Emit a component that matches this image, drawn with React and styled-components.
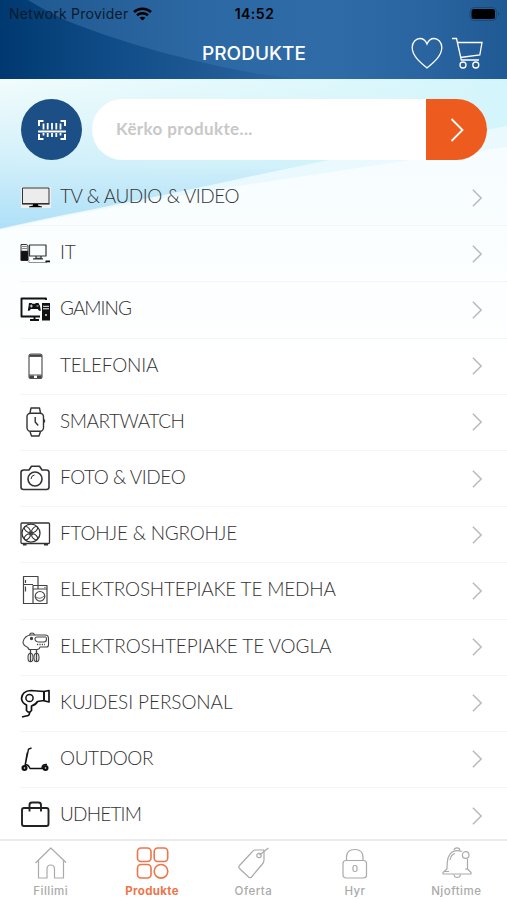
import styled, { createGlobalStyle } from 'styled-components'

const App = () => {
    return (
        <Screen>
            <GlobalStyle />
            <Header>
                <HeaderWaves />
                <StatusBar>
                    <Provider>
                        Network Provider
                        <WifiIcon />
                    </Provider>
                    <Time>14:52</Time>
                    <BatteryIcon />
                </StatusBar>
                <TitleBar>
                    <Title>PRODUKTE</Title>
                    <Actions>
                        <HeartIcon />
                        <CartIcon />
                    </Actions>
                </TitleBar>
            </Header>
            <Main>
                <PageWaves />
                <SearchRow>
                    <ScanButton aria-label="Scan">
                        <BarcodeIcon />
                    </ScanButton>
                    <SearchBox>
                        <SearchInput placeholder="Kërko produkte..." />
                        <SearchButton aria-label="Search">
                            <Arrow size={24} color="#fff" />
                        </SearchButton>
                    </SearchBox>
                </SearchRow>
                <List>
                    {categories.map(({ name, icon, spacing }) => (
                        <Row key={name}>
                            <Icon>{icon}</Icon>
                            <Name $spacing={spacing}>{name}</Name>
                            <Arrow size={18} color="#b9b9bb" />
                        </Row>
                    ))}
                </List>
            </Main>
            <TabBar>
                {tabs.map(({ label, icon, active, spacing }) => (
                    <Tab key={label} $active={active} $spacing={spacing}>
                        {icon}
                        <span>{label}</span>
                    </Tab>
                ))}
            </TabBar>
        </Screen>
    )
}

const HeaderWaves = () => (
    <Backdrop viewBox="0 0 507 79" preserveAspectRatio="none">
        <defs>
            <linearGradient id="light" x1="0" x2="1">
                <stop offset="0" stopColor="#1f5890" />
                <stop offset="0.4" stopColor="#2c68a3" />
                <stop offset="0.65" stopColor="#2f6ca7" />
                <stop offset="0.85" stopColor="#2964a0" />
                <stop offset="1" stopColor="#205a94" />
            </linearGradient>
            <linearGradient id="dark" x1="0" x2="1">
                <stop offset="0" stopColor="#003970" />
                <stop offset="0.35" stopColor="#0f4b86" />
                <stop offset="0.75" stopColor="#215c97" />
                <stop offset="1" stopColor="#2c68a3" />
            </linearGradient>
        </defs>
        <path d="M0 0h507v79H0z" fill="url(#light)" />
        <path
            d="M0 0H28C45 10 60 18 75 24C125 43 180 59 253 73L300 79H0z"
            fill="url(#dark)"
        />
    </Backdrop>
)

const PageWaves = () => (
    <Backdrop viewBox="0 0 507 761" preserveAspectRatio="none">
        <defs>
            <linearGradient id="sky" x1="0" y1="0" x2="0" y2="150" gradientUnits="userSpaceOnUse">
                <stop offset="0" stopColor="#f2fcfc" />
                <stop offset="0.5" stopColor="#d5f1fa" />
                <stop offset="1" stopColor="#aee0f8" />
            </linearGradient>
            <linearGradient id="glow" x1="0" x2="1">
                <stop offset="0" stopColor="#d3f5fb" stopOpacity="0" />
                <stop offset="1" stopColor="#d3f5fb" />
            </linearGradient>
            <linearGradient id="page" x1="0" y1="90" x2="0" y2="290" gradientUnits="userSpaceOnUse">
                <stop offset="0" stopColor="#f7fdff" />
                <stop offset="0.45" stopColor="#fbfeff" />
                <stop offset="1" stopColor="#fff" />
            </linearGradient>
        </defs>
        <path d="M0 0h507v151H0z" fill="url(#sky)" />
        <path d="M0 0h507v90H0z" fill="url(#glow)" />
        <path d="M0 150C90 130 180 114 253 97C340 78 430 62 507 47V761H0z" fill="#eaf9fe" />
        <path
            d="M0 151C90 131 180 117 253 105C350 90 430 78 507 68V761H0z"
            fill="url(#page)"
        />
    </Backdrop>
)

const Arrow = ({ size, color }) => (
    <svg width={size} height={size} viewBox="0 0 24 24" fill="none" stroke={color} strokeWidth={size > 20 ? 1.8 : 2}>
        <path d="M6.500 1L17.500 12L6.500 23" />
    </svg>
)

const WifiIcon = () => (
    <svg width="19" height="14" viewBox="0 0 19 14" fill="none" stroke="#000" strokeWidth="2.500">
        <path d="M1 5C5.700.7 13.300.7 18 5" />
        <path d="M4 8.300C7.200 5.500 11.800 5.500 15 8.300" />
        <path d="M9.500 13.500L6.600 10.700C8.200 9.300 10.800 9.300 12.400 10.700z" fill="#000" stroke="none" />
    </svg>
)

const BatteryIcon = () => (
    <svg width="31" height="14" viewBox="0 0 31 14">
        <rect x="1" y=".5" width="26.500" height="13" rx="4" fill="none" stroke="#194a79" strokeWidth="1" />
        <rect x="2.500" y="2" width="23.500" height="10" rx="2.500" fill="#000" />
        <path d="M29 5v4q1.500-.5 1.500-2T29 5z" fill="#194a79" />
    </svg>
)

const HeartIcon = () => (
    <svg width="33" height="33" viewBox="0 0 33 33" fill="none" stroke="#fff" strokeWidth="1.300">
        <path d="M17 31C10.500 25.500 2.200 19 2.200 10.500C2.200 5 6 1.500 10 1.500C13 1.500 15.500 3.500 17 7C18.500 3.500 21 1.500 24 1.500C28 1.500 31.800 5 31.800 10.500C31.800 19 23.500 25.500 17 31z" />
    </svg>
)

const CartIcon = () => (
    <svg width="33" height="33" viewBox="0 0 33 33" fill="none" stroke="#fff" strokeWidth="1.300">
        <path d="M1 1.500h4.500L10.300 23H28M6.200 5.500H31L28.800 18L9.300 20.500" />
        <circle cx="12" cy="28" r="3" />
        <circle cx="24.800" cy="28" r="3" />
    </svg>
)

const BarcodeIcon = () => (
    <svg width="30" height="22" viewBox="0 0 30 22" fill="none" stroke="#fff" strokeWidth="2">
        <path d="M2 7V2h4.500M23.500 2H28v5M2 15v5h4.500M23.500 20H28v-5" />
        <path d="M1 12.500h28" />
        <path d="M6.500 4.500v6M10.700 4v6.500M15 4v6.500M19.300 4v6.500M23.500 4.500v6M6.500 14v2.500M10.700 14v4M15 14v4M19.300 14v4M23.500 14v2.500" strokeWidth="1.800" />
    </svg>
)

const TvIcon = () => (
    <svg {...line}>
        <path d="M1 5h30v21H1z" fill="#f1f0f0" stroke="none" />
        <path d="M2.500 6h26.500v15.500H2.500z" fill="#ececec" strokeWidth="1" />
        <path d="M2 21.800h27.500" strokeWidth="1.600" />
        <path d="M13 22h5v1.500l4 1v.8H9v-.8l4-1z" fill="#000" stroke="none" />
    </svg>
)

const ItIcon = () => (
    <svg {...line}>
        <path d="M1 6.500h5.500l1.500 1.200V22.500H1z" fill="#f4f4f4" strokeWidth="1" />
        <path d="M1 13h7v9.500H1z" fill="#111" strokeWidth=".5" />
        <path d="M2 8.500h5M2 10.500h5" stroke="#888" strokeWidth="1" />
        <path d="M9.500 7h16.500v11H9.500z" strokeWidth="1.200" />
        <path d="M16 18v2.500h5V18M13 20.800h10" strokeWidth="1.300" />
        <path d="M8 24.500l1.500-2M9 24.500h18" stroke="#777" strokeWidth=".8" />
        <path d="M25.500 22.500h4.500v1.800h-4.500z" fill="#111" stroke="none" />
    </svg>
)

const GamingIcon = () => (
    <svg {...line}>
        <path d="M26 6V4.500H1.500V22.500H20M10 26h9M14.500 22.500v3.500" stroke="#111" strokeWidth="1.900" />
        <path d="M9 9h2.500l1 .8h2.500l1-.8h2.500l1.500 3 .8 4.500q-1.600 1.200-3-1.500h-7q-1.400 2.700-3 1.500l.8-4.500z" fill="#111" stroke="none" />
        <path d="M9.800 12h3M11.300 10.500v3M16.500 12h2" stroke="#fff" strokeWidth=".8" />
        <path d="M22 9h8v17.500h-8z" fill="#111" stroke="none" />
        <path d="M23 12.300h6M23 14.800h6" stroke="#fff" strokeWidth="1" />
        <circle cx="26" cy="21" r=".9" fill="#fff" stroke="none" />
    </svg>
)

const PhoneIcon = () => (
    <svg {...line}>
        <rect x="9" y="3" width="13" height="24.500" rx="2" strokeWidth="1.200" stroke="#555" />
        <path d="M9 5.500h13M9 24h13" strokeWidth="1.200" stroke="#555" />
        <path d="M9.500 3.600h12v1.500h-12zM9.500 24.500h4.500v2.500H9.500zM17 24.500h4.500v2.500H17z" fill="#444" stroke="none" />
    </svg>
)

const WatchIcon = () => (
    <svg {...line}>
        <rect x="7" y="6.200" width="16.500" height="18" rx="3.500" />
        <path d="M10 6l1-5h8.500l1 5M10 24.500l1.500 4.500h7.500l1.500-4.500" />
        <path d="M15.200 10v5l3 3.500" />
        <path d="M24.500 12.500v3" strokeWidth="1.200" />
    </svg>
)

const CameraIcon = () => (
    <svg {...line}>
        <path d="M4 7h5l2.500-3.800h8L22 7H26.500q2.500 0 2.500 2.500v14.500Q29 26.500 26.500 26.500H3.500Q1 26.500 1 24v-14.500Q1 7 4 7z" strokeWidth="1.600" />
        <circle cx="15" cy="16" r="7" strokeWidth="1.600" />
        <path d="M11 16Q11.300 12.400 14.500 12" strokeWidth="1" />
    </svg>
)

const FanIcon = () => (
    <svg {...line}>
        <rect x="1" y="4" width="28.500" height="20.500" rx="1" strokeWidth="1.300" />
        <circle cx="11" cy="14.200" r="9" strokeWidth="1.300" />
        <g strokeWidth="1.100">
            <ellipse cx="7.300" cy="10.500" rx="3.600" ry="2" transform="rotate(45 7.300 10.500)" />
            <ellipse cx="14.700" cy="10.500" rx="3.600" ry="2" transform="rotate(-45 14.700 10.500)" />
            <ellipse cx="7.300" cy="17.900" rx="3.600" ry="2" transform="rotate(-45 7.300 17.900)" />
            <ellipse cx="14.700" cy="17.900" rx="3.600" ry="2" transform="rotate(45 14.700 17.900)" />
        </g>
        <circle cx="11" cy="14.200" r="2" fill="#444" stroke="none" />
        <path d="M3 25.500h3.500M24 25.500h4" strokeWidth="2" />
    </svg>
)

const FridgeIcon = () => (
    <svg {...line} stroke="#444" strokeWidth="1.200">
        <path d="M13 28.500H3.500V1.500H18V10.500M3.500 9.500H13M5.500 5v3M5.500 11.500v5" />
        <path d="M13 10.500h14v18H13zM13 14H27M18 10.500v3.500M24.500 12.300h1" />
        <circle cx="20" cy="21.300" r="4.800" />
        <path d="M16 22q4 3 8-1" strokeWidth=".8" />
    </svg>
)

const MixerIcon = () => (
    <svg {...line} stroke="#444" strokeWidth="1.100">
        <path d="M8 15.500Q3 13.500 3 10Q4.500 3.500 11 3H25Q28.500 3 28.500 6.500V13Q28.500 15 26.500 15H20Q19.500 17.500 17 17.500H10Q8 17.500 8 15.500z" />
        <path d="M17 5H25.500Q26.500 5 26.500 7Q26.500 10 24 10H18.500Q15 9.500 15 7Q15 5 17 5zM9.500 3Q10 1 12 1T14.500 3" />
        <circle cx="11.500" cy="6.500" r="1.100" fill="#333" />
        <path d="M17 12.500h8" strokeDasharray="1.200 1.200" strokeWidth="1.500" />
        <path d="M10.500 17.500V30M16.500 17.500V30" strokeWidth="1.300" />
        <ellipse cx="10.500" cy="25.500" rx="2.500" ry="4.300" />
        <ellipse cx="16.500" cy="25.500" rx="2.500" ry="4.300" />
    </svg>
)

const DryerIcon = () => (
    <svg {...line} stroke="#111" strokeWidth="1.700">
        <path d="M24 3.500L11 2.500Q2 3 1.500 10.500Q2 15 6.500 17V22.500L8 24H10L11.500 22.500V18Q16 16.500 17.500 13.500L24 12.500z" />
        <path d="M24 3.500l5-1v11.500L24 12.700z" />
        <circle cx="9.500" cy="10" r="3.600" strokeWidth="1.500" />
        <path d="M9.500 24Q10 28 6 28L2 29" />
    </svg>
)

const ScooterIcon = () => (
    <svg {...line} stroke="#111" strokeWidth="1.400">
        <path d="M11.500 4L8.500 5.200L5 22M7.300 8.500L5.200 20.500Q8.500 20.500 10 24.500H23.500" />
        <path d="M22 24q0-4 5-3.500" />
        <circle cx="4.500" cy="24" r="1.900" strokeWidth="2.300" />
        <circle cx="25.500" cy="24" r="1.900" strokeWidth="2.300" />
    </svg>
)

const CaseIcon = () => (
    <svg {...line} stroke="#222" strokeWidth="1.900">
        <rect x="2" y="8" width="26.500" height="18" rx="2" />
        <path d="M9.500 11.500V5Q9.500 2.500 12 2.500h6.500q2.500 0 2.500 2.500V11.500" />
    </svg>
)

const HomeTab = () => (
    <svg {...tabLine}>
        <path d="M1.500 16L16.800 1L32 15.500M4.500 13.500V31H13V22Q13 18 16.800 18Q20.500 18 20.500 22V31H29.500V13.500" />
    </svg>
)

const GridTab = () => (
    <svg {...tabLine} strokeWidth="1.600">
        <rect x="1.500" y="1" width="13.500" height="13.500" rx="3.500" />
        <rect x="18.200" y="1" width="13.500" height="13.500" rx="3.500" />
        <rect x="1.500" y="17.500" width="13.500" height="13.500" rx="3.500" />
        <circle cx="25" cy="24.300" r="6.800" />
    </svg>
)

const SaleTab = () => (
    <svg {...tabLine}>
        <path d="M18 3H27V13Q27 15.500 25 17.500L14.500 30Q13 31.500 11.500 30L2.500 21.500Q1 20 2.500 18.500L15 5Q16.500 3 18 3z" />
        <path d="M22.500 8L31.500 1" />
        <circle cx="22" cy="8.500" r="2.200" />
    </svg>
)

const LockTab = () => (
    <svg {...tabLine}>
        <rect x="5" y="13.500" width="23.500" height="17.500" rx="3" />
        <path d="M8.500 13.500V10.500Q8.500 2.500 16.800 2.500Q25 2.500 25 10.500V13.500" />
        <rect x="15" y="18.500" width="4" height="6" rx="1.800" />
    </svg>
)

const BellTab = () => (
    <svg {...tabLine}>
        <path d="M22 4.500Q11.500 1 8 11Q7 15 7 22L3 25.500V27H31V25.500L27.500 22V12" />
        <path d="M14 3Q14.500 .8 17 .8Q19.500 .8 20 3.500M14 27.500Q14.500 30.500 17 30.500Q20 30.500 20.500 27.500M10 13Q11 7.500 15 6.500" />
        <circle cx="25.700" cy="8" r="3.300" />
        <path d="M25 22h3M4 24.500h5" />
    </svg>
)

const line = {
    width: 31,
    height: 31,
    viewBox: '0 0 31 31',
    fill: 'none',
    stroke: '#333',
    strokeWidth: 1.4,
    strokeLinejoin: 'round',
}
const tabLine = {
    width: 33,
    height: 33,
    viewBox: '0 0 33 33',
    fill: 'none',
    stroke: 'currentColor',
    strokeWidth: 1.2,
    strokeLinejoin: 'round',
}

const categories = [
    { name: 'TV & AUDIO & VIDEO', icon: <TvIcon />, spacing: -0.42 },
    { name: 'IT', icon: <ItIcon />, spacing: -0.3 },
    { name: 'GAMING', icon: <GamingIcon />, spacing: -1 },
    { name: 'TELEFONIA', icon: <PhoneIcon />, spacing: -0.2 },
    { name: 'SMARTWATCH', icon: <WatchIcon />, spacing: -0.45 },
    { name: 'FOTO & VIDEO', icon: <CameraIcon />, spacing: -0.45 },
    { name: 'FTOHJE & NGROHJE', icon: <FanIcon />, spacing: -0.24 },
    { name: 'ELEKTROSHTEPIAKE TE MEDHA', icon: <FridgeIcon />, spacing: -0.19 },
    { name: 'ELEKTROSHTEPIAKE TE VOGLA', icon: <MixerIcon />, spacing: -0.09 },
    { name: 'KUJDESI PERSONAL', icon: <DryerIcon />, spacing: -0.1 },
    { name: 'OUTDOOR', icon: <ScooterIcon />, spacing: -0.4 },
    { name: 'UDHETIM', icon: <CaseIcon />, spacing: -0.8 },
]

const tabs = [
    { label: 'Fillimi', icon: <HomeTab />, spacing: 0.5 },
    { label: 'Produkte', icon: <GridTab />, active: true, spacing: 0.35 },
    { label: 'Oferta', icon: <SaleTab />, spacing: 0.5 },
    { label: 'Hyr', icon: <LockTab />, spacing: 0.4 },
    { label: 'Njoftime', icon: <BellTab />, spacing: 0.5 },
]

const GlobalStyle = createGlobalStyle`
    * {
        box-sizing: border-box;
    }
    body {
        margin: 0;
        overflow: hidden;
    }
`
const Screen = styled.div`
    display: flex;
    flex-direction: column;
    width: 507px;
    height: 900px;
    overflow: hidden;
    background-color: #fff;
    font-family: 'Lato', sans-serif;
`
const Backdrop = styled.svg`
    position: absolute;
    inset: 0;
    width: 100%;
    height: 100%;
    z-index: -1;
`
const Header = styled.header`
    position: relative;
    z-index: 0;
    flex: none;
    height: 79px;
`
const StatusBar = styled.div`
    display: grid;
    grid-template-columns: 1fr auto 1fr;
    align-items: center;
    height: 27px;
    padding: 0 7px 0 9px;
    font-family: 'Inter', sans-serif;
    font-size: 14px;
    color: #0a1a2c;
    & > svg {
        justify-self: end;
    }
`
const Provider = styled.div`
    display: flex;
    align-items: center;
    gap: 5px;
    letter-spacing: 0.24px;
`
const Time = styled.strong`
    font-weight: 600;
    letter-spacing: 0.5px;
    color: #000;
`
const TitleBar = styled.div`
    display: grid;
    grid-template-columns: 1fr auto 1fr;
    align-items: center;
    height: 52px;
    padding: 0 23px 0 24px;
`
const Title = styled.h1`
    grid-column: 2;
    margin: 0;
    font-family: 'Inter', sans-serif;
    font-size: 19px;
    font-weight: 500;
    color: #fff;
`
const Actions = styled.div`
    display: flex;
    justify-content: flex-end;
    gap: 8px;
`
const Main = styled.main`
    position: relative;
    z-index: 0;
    flex: 1;
    min-height: 0;
    overflow: hidden;
`
const SearchRow = styled.div`
    display: flex;
    gap: 10px;
    padding: 20px 20px 10px 21px;
`
const ScanButton = styled.button`
    display: flex;
    align-items: center;
    justify-content: center;
    width: 61px;
    height: 61px;
    padding: 0;
    border: none;
    border-radius: 50%;
    background-color: #1b4f86;
`
const SearchBox = styled.div`
    display: flex;
    flex: 1;
    height: 61px;
    overflow: hidden;
    border-radius: 31px;
    background-color: #fff;
`
const SearchInput = styled.input`
    flex: 1;
    min-width: 0;
    padding: 0 24px 3px;
    border: none;
    outline: none;
    background: none;
    font-family: 'Lato', sans-serif;
    font-size: 17px;
    font-weight: 700;
    letter-spacing: 0.38px;
    &::placeholder {
        color: #c8c8c8;
        opacity: 1;
    }
`
const SearchButton = styled.button`
    display: flex;
    align-items: center;
    justify-content: center;
    width: 61px;
    padding: 0;
    border: none;
    background-color: #ed5b1f;
`
const List = styled.ul`
    margin: 0;
    padding: 0 0 0 20px;
    list-style: none;
`
const Row = styled.li`
    display: flex;
    align-items: center;
    height: 56.200px;
    padding-right: 21px;
    border-bottom: 1px solid #f3f5f6;
`
const Icon = styled.div`
    display: flex;
    width: 40px;
`
const Name = styled.span`
    flex: 1;
    padding-bottom: 4px;
    font-size: 19px;
    font-weight: 300;
    letter-spacing: ${({ $spacing }) => $spacing}px;
    white-space: nowrap;
    color: #333;
`
const TabBar = styled.nav`
    display: grid;
    grid-template-columns: repeat(5, 1fr);
    flex: none;
    height: 61px;
    border-top: 2px solid #ebebeb;
    background-color: #fff;
`
const Tab = styled.div`
    display: flex;
    flex-direction: column;
    align-items: center;
    gap: 4px;
    padding-top: 6px;
    font-family: 'Inter', sans-serif;
    font-size: 11.500px;
    font-weight: ${({ $active }) => ($active ? 700 : 500)};
    letter-spacing: ${({ $spacing }) => $spacing}px;
    color: ${({ $active }) => ($active ? '#ee7549' : '#aaa')};
`

export default App
